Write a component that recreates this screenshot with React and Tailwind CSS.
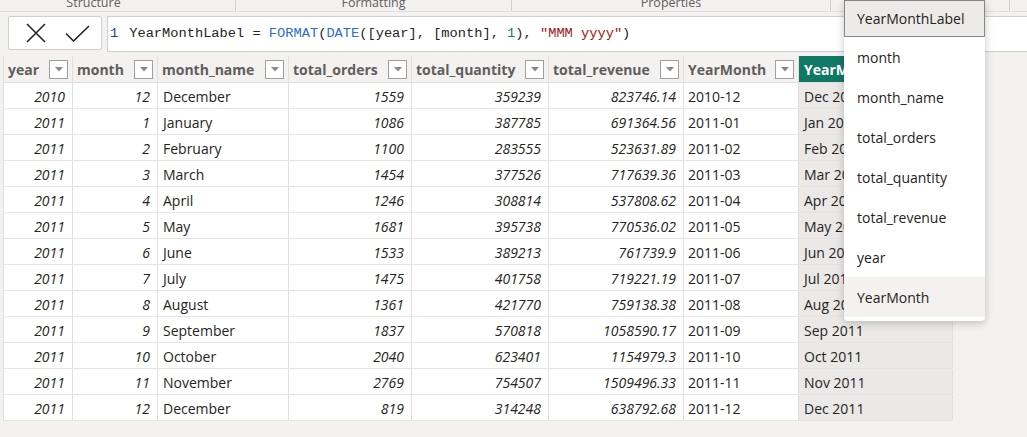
import { useState } from 'react';

const rows = [
  ['2010', '12', 'December', '1559', '359239', '823746.14', '2010-12', 'Dec 2010'],
  ['2011', '1', 'January', '1086', '387785', '691364.56', '2011-01', 'Jan 2011'],
  ['2011', '2', 'February', '1100', '283555', '523631.89', '2011-02', 'Feb 2011'],
  ['2011', '3', 'March', '1454', '377526', '717639.36', '2011-03', 'Mar 2011'],
  ['2011', '4', 'April', '1246', '308814', '537808.62', '2011-04', 'Apr 2011'],
  ['2011', '5', 'May', '1681', '395738', '770536.02', '2011-05', 'May 2011'],
  ['2011', '6', 'June', '1533', '389213', '761739.9', '2011-06', 'Jun 2011'],
  ['2011', '7', 'July', '1475', '401758', '719221.19', '2011-07', 'Jul 2011'],
  ['2011', '8', 'August', '1361', '421770', '759138.38', '2011-08', 'Aug 2011'],
  ['2011', '9', 'September', '1837', '570818', '1058590.17', '2011-09', 'Sep 2011'],
  ['2011', '10', 'October', '2040', '623401', '1154979.3', '2011-10', 'Oct 2011'],
  ['2011', '11', 'November', '2769', '754507', '1509496.33', '2011-11', 'Nov 2011'],
  ['2011', '12', 'December', '819', '314248', '638792.68', '2011-12', 'Dec 2011'],
];

const cols = [
  { name: 'year', w: 'w-[69px]', cell: 'justify-end pr-[7px] italic' },
  { name: 'month', w: 'w-[85px]', cell: 'justify-end pr-[7px] italic' },
  { name: 'month_name', w: 'w-[131px]', cell: 'pl-[5px]' },
  { name: 'total_orders', w: 'w-[123px]', cell: 'justify-end pr-[7px] italic' },
  { name: 'total_quantity', w: 'w-[137px]', cell: 'justify-end pr-[7px] italic' },
  { name: 'total_revenue', w: 'w-[135px]', cell: 'justify-end pr-[7px] italic' },
  { name: 'YearMonth', w: 'w-[115px]', cell: 'pl-[4px]' },
  { name: 'YearMonthLabel', w: 'w-[154px]', cell: 'pl-[5px] bg-[#ebe9e7]', active: true },
];

const fields = ['month', 'month_name', 'total_orders', 'total_quantity', 'total_revenue', 'year', 'YearMonth'];

function FilterButton() {
  return (
    <div className="w-[19px] h-[19px] shrink-0 border border-[#a19f9d] bg-white flex items-center justify-center">
      <svg width="8" height="5" viewBox="0 0 8 5"><path d="M0 0h8L4 4.5z" fill="#8a8886" /></svg>
    </div>
  );
}

export default function App() {
  const [hover] = useState('YearMonth');

  return (
    <div className="relative w-[1027px] h-[437px] overflow-hidden bg-[#f3f2f1] text-[#252423]" style={{ fontFamily: '"Open Sans", "Noto Sans", sans-serif' }}>
      {/* ribbon group labels, cut at the top */}
      <div className="flex h-[12px] border-b border-[#e1dfdd] overflow-hidden text-[12.5px] text-[#605e5c]">
        <div className="w-[236px] flex justify-center pr-[48px] border-r border-[#d2d0ce]"><span className="-mt-[5px] leading-[16px]">Structure</span></div>
        <div className="w-[276px] flex justify-center border-r border-[#d2d0ce]"><span className="-mt-[5px] leading-[16px]">Formatting</span></div>
        <div className="w-[319px] flex justify-center border-r border-[#d2d0ce]"><span className="-mt-[5px] leading-[16px]">Properties</span></div>
        <div className="w-[179px] border-r border-[#d2d0ce]"></div>
        <div className="flex-1"></div>
      </div>

      {/* formula bar */}
      <div className="flex items-start pt-[4px] h-[44px]">
        <div className="ml-[8px] w-[94px] h-[34px] bg-white border border-[#d2d0ce] rounded-[2px] flex items-center">
          <svg className="ml-[17px]" width="20" height="20" viewBox="0 0 20 20">
            <path d="M1 1L19 19M19 1L1 19" stroke="#252423" strokeWidth="1.6" fill="none" />
          </svg>
          <svg className="ml-[19px]" width="25" height="17" viewBox="0 0 25 17">
            <path d="M1 8.5L8.5 16L24 1" stroke="#252423" strokeWidth="1.6" fill="none" />
          </svg>
        </div>
        <div className="ml-[5px] flex-1 h-[36px] bg-white border border-r-0 border-[#d2d0ce] flex items-center text-[13.7px] whitespace-pre" style={{ fontFamily: '"Liberation Mono", monospace' }}>
          <span className="ml-[2px] text-[#1b3f9a]">1</span>
          <span className="ml-[11px]">
            <span className="text-[#252423]">YearMonthLabel = </span>
            <span className="text-[#2f6bd0]">FORMAT</span>(<span className="text-[#2f6bd0]">DATE</span>([year], [month], <span className="text-[#098658]">1</span>), <span className="text-[#a31515]">"MMM yyyy"</span>)
          </span>
        </div>
      </div>

      {/* table */}
      <div className="ml-[3px] w-[949px] border-l border-[#e1dfdd]">
        <div className="flex h-[27px] border-b border-[#e1dfdd] bg-[#f3f2f1]">
          {cols.map((c) => (
            <div
              key={c.name}
              className={
                c.active
                  ? `${c.w} shrink-0 flex items-center pl-[5px] bg-[#117865] text-white font-bold text-[14px] overflow-hidden whitespace-nowrap`
                  : `${c.w} shrink-0 flex items-center justify-between pl-[4px] pr-[4px] border-r border-[#e1dfdd] font-bold text-[14px] text-[#605e5c]`
              }
            >
              <span className="pt-[1px]">{c.name}</span>
              {!c.active && <FilterButton />}
            </div>
          ))}
        </div>
        {rows.map((r, i) => (
          <div key={i} className="flex h-[26px] border-b border-[#e6e4e2] bg-white">
            {cols.map((c, j) => (
              <div key={j} className={`${c.w} ${c.cell} shrink-0 flex items-center pt-[2px] border-r border-[#e1dfdd] text-[14px] whitespace-nowrap overflow-hidden`}>
                {r[j]}
              </div>
            ))}
          </div>
        ))}
      </div>

      {/* column picker */}
      <div className="absolute left-[844px] top-0 w-[141px] pb-[4px] bg-white rounded-b-[4px] shadow-[0_2px_8px_rgba(0,0,0,0.22)] text-[14px] text-[#252423]">
        <div className="h-[37px] flex items-center pl-[12px] bg-[#edebe9] border border-[#8a8886]">YearMonthLabel</div>
        {fields.map((f) => (
          <div key={f} className={`h-[40px] flex items-center pl-[13px] ${f === hover ? 'bg-[#f3f2f1]' : ''}`}>{f}</div>
        ))}
      </div>
    </div>
  );
}
